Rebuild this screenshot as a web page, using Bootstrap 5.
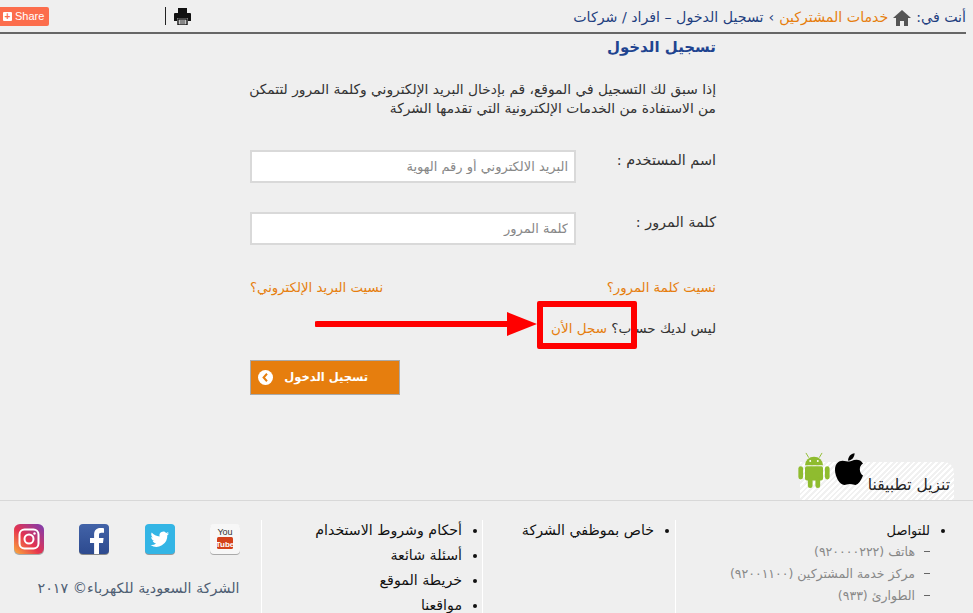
<!DOCTYPE html>
<html lang="ar" dir="rtl">
<head>
<meta charset="utf-8">
<title>تسجيل الدخول</title>
<link href="https://cdn.jsdelivr.net/npm/bootstrap@5.3.0/dist/css/bootstrap.min.css" rel="stylesheet">
<style>
html,body{background:#efefef;margin:0;height:613px;overflow:hidden}
body{font-family:"DejaVu Sans",sans-serif;font-size:12px;color:#333;line-height:1.4}
.ar-orange{color:#e67e0e;text-decoration:none}
.ar-top{height:34px;margin-right:7px;border-bottom:2px solid #666;color:#1f3f7f;font-size:14.2px}
.ar-crumb{padding-top:3px}
.ar-share{width:49px;height:19px;background:#fc6d4c;color:#fff;font:11px "Liberation Sans",sans-serif;border-radius:0 2px 2px 0;direction:ltr;gap:3px;padding-left:3px}
.ar-share i{display:block;width:9px;height:9px;background:#fff;color:#fc6d4c;font:bold 10px/9px "Liberation Sans",sans-serif;text-align:center;border-radius:1px}
.ar-tools{margin-left:116px;height:18px;border-left:1px solid #222;padding-left:8px}
.ar-sep{margin:0 5px}
.ar-main{width:466px;margin-right:257px;height:428px;position:relative;padding-top:3px;box-sizing:border-box}
.ar-h{color:#1f4490;font-size:15px;font-weight:700;line-height:20px;margin:0}
.ar-intro{margin:23px 0 0;line-height:18.5px;font-size:13.8px;color:#333;white-space:nowrap}
.ar-field{margin-top:33px}
.ar-field + .ar-field{margin-top:29px}
.ar-lab{width:140px;font-size:14.4px;line-height:20px}
.ar-main .form-control{width:326px;height:33px;border:2px solid #d9d9d9;border-radius:0;font-size:13px;padding:0 6px;color:#888;background:#fff;box-shadow:none}
.ar-main .form-control::placeholder{color:#888;opacity:1}
.ar-links{margin-top:33px;font-size:13.3px;line-height:20px}
.ar-reg{margin-top:20px;font-size:13.5px;line-height:20px;white-space:nowrap}
.ar-btn.btn{width:150px;height:35px;margin:22px 316px 0 0;background:#e67e0e;border:1px solid #a9a9a9;border-radius:0;color:#fff;font-size:11.5px;font-weight:700;padding:0 31px 0 7px;white-space:nowrap;--bs-btn-hover-bg:#e67e0e}
.ar-arrowc{width:15px;height:15px;display:block}
.ar-mark{position:absolute;left:287px;top:267px;width:100px;height:48px;border:6px solid #f00;border-radius:2px;pointer-events:none}
.ar-arrow{position:absolute;left:65px;top:277px;pointer-events:none}
.ar-tabwrap{height:38px;position:relative}
.ar-tab{position:absolute;right:19px;top:0;width:154px;height:38px;border-radius:0 10px 0 0;background:repeating-linear-gradient(135deg,#fff 0 2px,#f1f1f1 2px 4px);font-size:15.5px;color:#222;padding:13px 4px 0 0;white-space:nowrap}
.ar-apple{position:absolute;left:35px;top:-9px}
.ar-android{position:absolute;left:-2px;top:-10px}
.ar-foot{height:113px;border-top:1px solid #d8d8d8;overflow:hidden;padding-top:19px}
.ar-col{height:94px;border-left:1px solid #fff;padding:0;flex:none}
.ar-c1{width:298px}.ar-c2{width:193px}.ar-c3{width:221px}.ar-c4{flex:1 1 auto;min-width:0;border-left:0}
.ar-col > ul{margin:-2px 0 0;padding:0 21px 0 0;font-size:14.2px;color:#111}
.ar-col li{line-height:25px;white-space:nowrap}
.ar-c1 > ul{padding-right:43px;font-size:13px}
.ar-c1 ul ul{margin:-2px 0 0;padding:0 15px 0 0;color:#888;list-style:none;font-size:12.5px}
.ar-c1 ul ul li{line-height:22px;position:relative}
.ar-c1 ul ul li::before{content:"";position:absolute;right:-15px;top:10px;width:6px;height:1px;background:#666}
.ar-c3 > ul{padding-right:20px}
.ar-social{margin:4px 0 0;padding:0 21px 0 14px;height:32px}
.ar-copy{margin-top:22px;padding-left:16px;text-align:center;font-size:14.3px;color:#4f5f74;white-space:nowrap}
</style>
</head>
<body>
<header class="ar-top d-flex align-items-center justify-content-between">
  <nav class="ar-crumb d-flex align-items-center text-nowrap">
    <span>أنت في:</span>
    <svg class="ar-sep" width="18" height="16" viewBox="0 0 18 16" aria-hidden="true"><path d="M9 0 0 8h3v8h4v-5h4v5h4V8h3z" fill="#555"/></svg>
    <a class="ar-orange" href="#">خدمات المشتركين</a>
    <span class="ar-sep">›</span>
    <span>تسجيل الدخول – افراد / شركات</span>
  </nav>
  <div class="d-flex align-items-center">
    <div class="ar-tools d-flex align-items-center">
      <svg width="17" height="17" viewBox="0 0 17 17" aria-hidden="true"><path d="M4 0h9v5H4z" fill="#111"/><path d="M1 5h15a1 1 0 0 1 1 1v7h-3v-3H3v3H0V6a1 1 0 0 1 1-1z" fill="#111"/><path d="M4 11h9v6H4z" fill="#fff" stroke="#111" stroke-width="1.400"/><path d="M5.500 13h6M5.500 15h6" stroke="#111"/></svg>
    </div>
    <a class="ar-share d-flex align-items-center text-decoration-none" href="#"><i>+</i>Share</a>
  </div>
</header>
<main class="ar-main">
  <h1 class="ar-h">تسجيل الدخول</h1>
  <p class="ar-intro">إذا سبق لك التسجيل في الموقع، قم بإدخال البريد الإلكتروني وكلمة المرور لتتمكن<br>من الاستفادة من الخدمات الإلكترونية التي تقدمها الشركة</p>
  <form>
    <div class="ar-field d-flex justify-content-between align-items-start">
      <label class="ar-lab" for="u">اسم المستخدم :</label>
      <input class="form-control" id="u" type="text" placeholder="البريد الالكتروني أو رقم الهوية">
    </div>
    <div class="ar-field d-flex justify-content-between align-items-start">
      <label class="ar-lab" for="p">كلمة المرور :</label>
      <input class="form-control" id="p" type="text" placeholder="كلمة المرور">
    </div>
    <div class="ar-links d-flex justify-content-between">
      <a class="ar-orange" href="#">نسيت كلمة المرور؟</a>
      <a class="ar-orange" href="#">نسيت البريد الإلكتروني؟</a>
    </div>
    <div class="ar-reg">ليس لديك حساب؟ <a class="ar-orange" href="#">سجل الأن</a></div>
    <a class="ar-btn btn d-flex align-items-center justify-content-between" href="#">
      <span>تسجيل الدخول</span>
      <svg class="ar-arrowc" viewBox="0 0 15 15" aria-hidden="true"><circle cx="7.500" cy="7.500" r="7.500" fill="#fff"/><path d="M9 3.800 5.600 7.500 9 11.200" fill="none" stroke="#e67e0e" stroke-width="2"/></svg>
    </a>
  </form>
  <div class="ar-mark"></div>
  <svg class="ar-arrow" width="222" height="26" viewBox="0 0 222 26" aria-hidden="true"><path d="M2 13h190" stroke="#f00" stroke-width="6" stroke-linecap="round"/><path d="M192 1l30 12-30 12z" fill="#f00"/></svg>
</main>
<div class="ar-tabwrap">
  <div class="ar-tab">
    تنزيل تطبيقنا
    <svg class="ar-apple" width="28" height="34" viewBox="0 0 30 36" aria-hidden="true"><path d="M15 9c2 0 4-2 8-2 3 0 5 1 7 4-5 3-4 10 0 13-2 5-5 10-8 10-2 0-3-1-6-1s-4 1-6 1C5 34 0 25 0 18 0 11 4 8 8 8c3 0 5 1 7 1zM21 0c0 4-3 8-7 8 0-4 3-8 7-8z" fill="#000"/></svg>
    <svg class="ar-android" width="32" height="36" viewBox="0 0 33 38" aria-hidden="true"><g fill="#8fbc2f"><path d="M7 14a9.500 9 0 0 1 19 0z"/><rect x="7" y="15" width="19" height="15" rx="2"/><rect x="0" y="15" width="5" height="14" rx="2.500"/><rect x="28" y="15" width="5" height="14" rx="2.500"/><rect x="10" y="27" width="5" height="11" rx="2.500"/><rect x="18" y="27" width="5" height="11" rx="2.500"/></g><path d="M11 6 8 1M22 6l3-5" stroke="#8fbc2f"/><circle cx="12.500" cy="9.500" r="1" fill="#fff"/><circle cx="20.500" cy="9.500" r="1" fill="#fff"/></svg>
  </div>
</div>
<footer class="ar-foot d-flex">
  <div class="ar-col ar-c1">
    <ul>
      <li>للتواصل
        <ul>
          <li>هاتف (٩٢٠٠٠٠٢٢٢)</li>
          <li>مركز خدمة المشتركين (٩٢٠٠١١٠٠)</li>
          <li>الطوارئ (٩٣٣)</li>
        </ul>
      </li>
    </ul>
  </div>
  <div class="ar-col ar-c2"><ul><li>خاص بموظفي الشركة</li></ul></div>
  <div class="ar-col ar-c3">
    <ul>
      <li>أحكام وشروط الاستخدام</li>
      <li>أسئلة شائعة</li>
      <li>خريطة الموقع</li>
      <li>مواقعنا</li>
    </ul>
  </div>
  <div class="ar-col ar-c4">
    <div class="ar-social d-flex justify-content-between align-items-start">
      <svg width="30" height="32" viewBox="0 0 30 32" aria-label="YouTube"><rect y="1" width="30" height="30" rx="4" fill="#aaa"/><rect width="30" height="30" rx="4" fill="#f7f7f7"/><text x="15" y="11" text-anchor="middle" font-family="Liberation Sans" font-size="9" fill="#333" direction="ltr">You</text><rect x="7" y="13" width="16" height="12" rx="1.500" fill="#d4411a"/><text x="15" y="22.500" text-anchor="middle" font-family="Liberation Sans" font-size="8" font-weight="700" fill="#fff" direction="ltr">Tube</text></svg>
      <svg width="30" height="32" viewBox="0 0 30 32" aria-label="Twitter"><rect y="1" width="30" height="30" rx="4" fill="#999"/><rect width="30" height="30" rx="4" fill="#33b5e5"/><path d="M24 9.500c-.7.300-1.400.5-2.200.6.800-.5 1.400-1.200 1.700-2.100-.7.400-1.600.8-2.400.9a3.800 3.800 0 0 0-6.500 3.500c-3.200-.2-6-1.700-7.900-4-.9 1.600-.5 3.800 1.200 5-.6 0-1.200-.2-1.700-.5 0 1.900 1.300 3.400 3.100 3.800-.6.200-1.200.2-1.700.1.500 1.500 1.900 2.600 3.600 2.600A7.700 7.700 0 0 1 5.500 21a10.900 10.900 0 0 0 16.800-9.700c.7-.5 1.300-1.100 1.700-1.800z" fill="#fff"/></svg>
      <svg width="30" height="32" viewBox="0 0 30 32" aria-label="Facebook"><defs><linearGradient id="fb" x1="0" y1="0" x2="0" y2="1"><stop offset="0" stop-color="#4263a8"/><stop offset="1" stop-color="#2d4a8f"/></linearGradient></defs><rect y="1" width="30" height="30" rx="4" fill="#888"/><rect width="30" height="30" rx="4" fill="url(#fb)"/><path d="M20 30V19h4l.6-5H20v-3c0-1.400.4-2.300 2.400-2.300H25V4.300c-.5 0-2-.2-3.700-.2-3.700 0-6.200 2.200-6.200 6.400V14H11v5h4.100v11z" fill="#fff"/></svg>
      <svg width="30" height="32" viewBox="0 0 30 32" aria-label="Instagram"><defs><linearGradient id="ig" x1="0" y1="1" x2="1" y2="0"><stop offset="0" stop-color="#fbb03b"/><stop offset=".45" stop-color="#e6334f"/><stop offset="1" stop-color="#7a3db5"/></linearGradient></defs><rect y="1" width="30" height="30" rx="5" fill="#aaa"/><rect width="30" height="30" rx="6" fill="url(#ig)"/><rect x="5.500" y="5.500" width="19" height="19" rx="5" fill="none" stroke="#fff" stroke-width="2"/><circle cx="15" cy="15" r="4.500" fill="none" stroke="#fff" stroke-width="2"/><circle cx="20.500" cy="9.500" r="1.200" fill="#fff"/></svg>
    </div>
    <div class="ar-copy">الشركة السعودية للكهرباء© ٢٠١٧</div>
  </div>
</footer>
</body>
</html>
